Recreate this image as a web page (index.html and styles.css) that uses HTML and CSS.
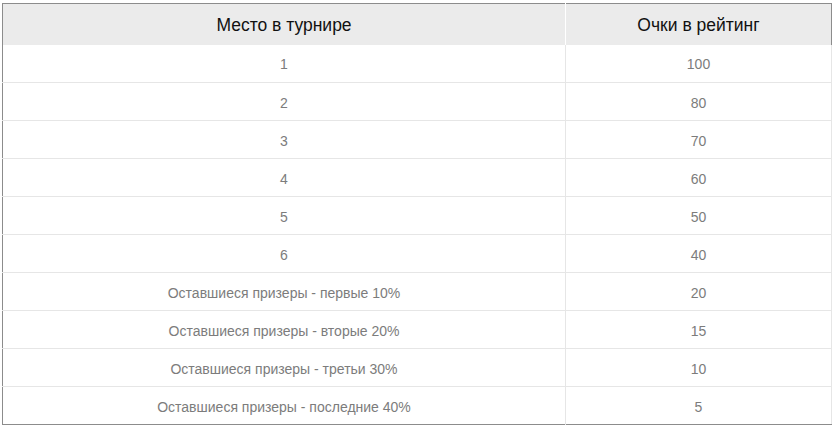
FILE: index.html
```html
<!DOCTYPE html>
<html lang="ru">
<head>
<meta charset="utf-8">
<link rel="stylesheet" href="styles.css">
</head>
<body>
<table class="rating">
  <thead>
    <tr><th class="c1">Место в турнире</th><th class="c2">Очки в рейтинг</th></tr>
  </thead>
  <tbody>
    <tr><td>1</td><td>100</td></tr>
    <tr><td>2</td><td>80</td></tr>
    <tr><td>3</td><td>70</td></tr>
    <tr><td>4</td><td>60</td></tr>
    <tr><td>5</td><td>50</td></tr>
    <tr><td>6</td><td>40</td></tr>
    <tr><td>Оставшиеся призеры - первые 10%</td><td>20</td></tr>
    <tr><td>Оставшиеся призеры - вторые 20%</td><td>15</td></tr>
    <tr><td>Оставшиеся призеры - третьи 30%</td><td>10</td></tr>
    <tr><td>Оставшиеся призеры - последние 40%</td><td>5</td></tr>
  </tbody>
</table>
</body>
</html>
```

FILE: styles.css
```css
html, body {
  margin: 0;
  padding: 0;
  background: #ffffff;
}
body {
  padding: 3px 2px 0 2px;
  font-family: "Liberation Sans", Arial, sans-serif;
}
.rating {
  width: 830px;
  border-collapse: collapse;
  border-top: 1px solid #8c8c8c;
  border-left: 1px solid #8c8c8c;
  border-bottom: 1px solid #8c8c8c;
  border-right: 1px solid #e6e6e6;
  table-layout: fixed;
}
.rating th {
  height: 41px;
  padding: 3px 0 0 0;
  box-sizing: border-box;
  background: #ebebeb;
  color: #111111;
  font-size: 17.5px;
  font-weight: normal;
  text-align: center;
  vertical-align: middle;
}
.rating th.c1 {
  width: 563px;
  border-right: 1px solid #ffffff;
}
.rating th.c2 {
  border-right: 1px solid #8c8c8c;
}
.rating td {
  height: 38px;
  padding: 2px 0 0 0;
  box-sizing: border-box;
  border-top: 1px solid #e6e6e6;
  color: #7c7c7c;
  font-size: 14px;
  text-align: center;
  vertical-align: middle;
}
.rating td:first-child {
  border-right: 1px solid #e6e6e6;
}
.rating tbody tr:first-child td {
  border-top: none;
  height: 38px;
}
```
